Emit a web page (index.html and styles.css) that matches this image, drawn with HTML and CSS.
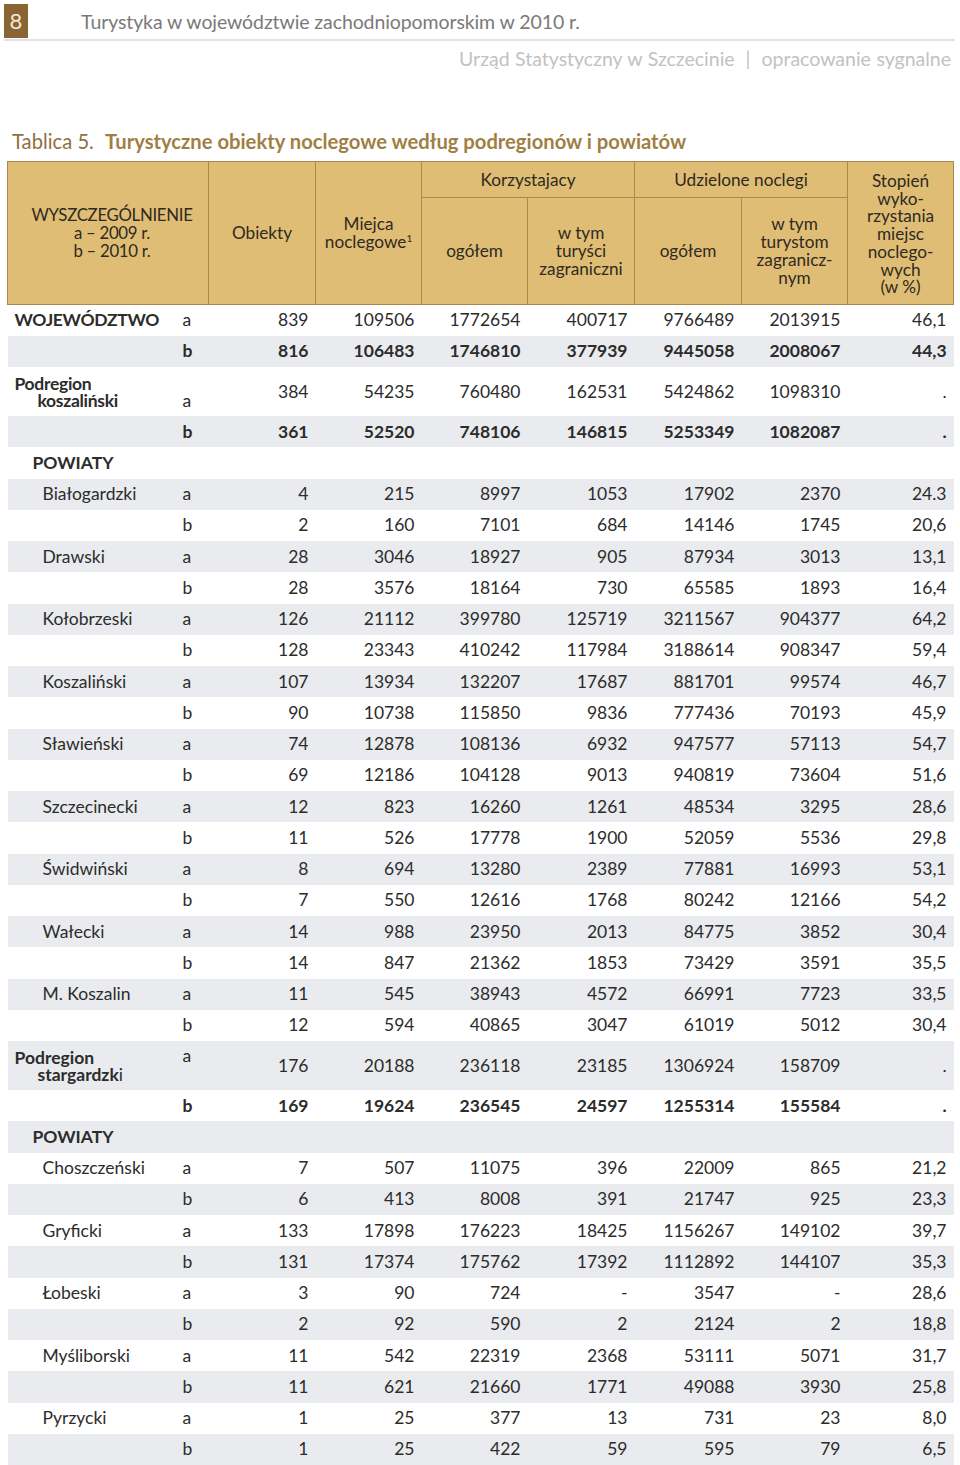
FILE: index.html
```html
<!DOCTYPE html>
<html lang="pl">
<head>
<meta charset="utf-8">
<title>Tablica 5</title>
<link rel="stylesheet" href="styles.css">
</head>
<body>
<header class="page-head">
  <div class="top-line">
    <span class="page-num">8</span>
    <span class="doc-title">Turystyka w województwie zachodniopomorskim w 2010 r.</span>
  </div>
  <div class="sub-line">Urząd Statystyczny w Szczecinie &nbsp;|&nbsp; opracowanie sygnalne</div>
</header>

<h1 class="table-title"><span class="tab-no">Tablica 5.</span> <span class="tab-name">Turystyczne obiekty noclegowe według podregionów i powiatów</span></h1>

<table class="data">
  <colgroup>
    <col class="c-name"><col class="c-let">
    <col class="c-n1"><col class="c-n2"><col class="c-n3"><col class="c-n4"><col class="c-n5"><col class="c-n6"><col class="c-n7">
  </colgroup>
  <thead>
    <tr class="h1">
      <th colspan="2" rowspan="2" class="wysz">WYSZCZEGÓLNIENIE<br>a – 2009 r.<br>b – 2010 r.</th>
      <th rowspan="2">Obiekty</th>
      <th rowspan="2">Miejca<br>noclegowe<sup>1</sup></th>
      <th colspan="2">Korzystajacy</th>
      <th colspan="2">Udzielone noclegi</th>
      <th rowspan="2" class="stop">Stopień<br>wyko-<br>rzystania<br>miejsc<br>noclego-<br>wych<br>(w %)</th>
    </tr>
    <tr class="h2">
      <th>ogółem</th>
      <th>w tym<br>turyści<br>zagraniczni</th>
      <th>ogółem</th>
      <th>w tym<br>turystom<br>zagranicz-<br>nym</th>
    </tr>
  </thead>
  <tbody>
    <tr><td class="nm lvl0 b">WOJEWÓDZTWO</td><td class="lt">a</td><td>839</td><td>109506</td><td>1772654</td><td>400717</td><td>9766489</td><td>2013915</td><td>46,1</td></tr>
    <tr class="bold"><td class="nm"></td><td class="lt">b</td><td>816</td><td>106483</td><td>1746810</td><td>377939</td><td>9445058</td><td>2008067</td><td>44,3</td></tr>
    <tr class="tall"><td class="nm lvl0 b two">Podregion<br><span class="ind">koszaliński</span></td><td class="lt bot">a</td><td>384</td><td>54235</td><td>760480</td><td>162531</td><td>5424862</td><td>1098310</td><td>.</td></tr>
    <tr class="bold"><td class="nm"></td><td class="lt">b</td><td>361</td><td>52520</td><td>748106</td><td>146815</td><td>5253349</td><td>1082087</td><td>.</td></tr>
    <tr><td class="nm lvl1 b">POWIATY</td><td class="lt"></td><td></td><td></td><td></td><td></td><td></td><td></td><td></td></tr>
    <tr><td class="nm lvl2">Białogardzki</td><td class="lt">a</td><td>4</td><td>215</td><td>8997</td><td>1053</td><td>17902</td><td>2370</td><td>24.3</td></tr>
    <tr><td class="nm"></td><td class="lt">b</td><td>2</td><td>160</td><td>7101</td><td>684</td><td>14146</td><td>1745</td><td>20,6</td></tr>
    <tr><td class="nm lvl2">Drawski</td><td class="lt">a</td><td>28</td><td>3046</td><td>18927</td><td>905</td><td>87934</td><td>3013</td><td>13,1</td></tr>
    <tr><td class="nm"></td><td class="lt">b</td><td>28</td><td>3576</td><td>18164</td><td>730</td><td>65585</td><td>1893</td><td>16,4</td></tr>
    <tr><td class="nm lvl2">Kołobrzeski</td><td class="lt">a</td><td>126</td><td>21112</td><td>399780</td><td>125719</td><td>3211567</td><td>904377</td><td>64,2</td></tr>
    <tr><td class="nm"></td><td class="lt">b</td><td>128</td><td>23343</td><td>410242</td><td>117984</td><td>3188614</td><td>908347</td><td>59,4</td></tr>
    <tr><td class="nm lvl2">Koszaliński</td><td class="lt">a</td><td>107</td><td>13934</td><td>132207</td><td>17687</td><td>881701</td><td>99574</td><td>46,7</td></tr>
    <tr><td class="nm"></td><td class="lt">b</td><td>90</td><td>10738</td><td>115850</td><td>9836</td><td>777436</td><td>70193</td><td>45,9</td></tr>
    <tr><td class="nm lvl2">Sławieński</td><td class="lt">a</td><td>74</td><td>12878</td><td>108136</td><td>6932</td><td>947577</td><td>57113</td><td>54,7</td></tr>
    <tr><td class="nm"></td><td class="lt">b</td><td>69</td><td>12186</td><td>104128</td><td>9013</td><td>940819</td><td>73604</td><td>51,6</td></tr>
    <tr><td class="nm lvl2">Szczecinecki</td><td class="lt">a</td><td>12</td><td>823</td><td>16260</td><td>1261</td><td>48534</td><td>3295</td><td>28,6</td></tr>
    <tr><td class="nm"></td><td class="lt">b</td><td>11</td><td>526</td><td>17778</td><td>1900</td><td>52059</td><td>5536</td><td>29,8</td></tr>
    <tr><td class="nm lvl2">Świdwiński</td><td class="lt">a</td><td>8</td><td>694</td><td>13280</td><td>2389</td><td>77881</td><td>16993</td><td>53,1</td></tr>
    <tr><td class="nm"></td><td class="lt">b</td><td>7</td><td>550</td><td>12616</td><td>1768</td><td>80242</td><td>12166</td><td>54,2</td></tr>
    <tr><td class="nm lvl2">Wałecki</td><td class="lt">a</td><td>14</td><td>988</td><td>23950</td><td>2013</td><td>84775</td><td>3852</td><td>30,4</td></tr>
    <tr><td class="nm"></td><td class="lt">b</td><td>14</td><td>847</td><td>21362</td><td>1853</td><td>73429</td><td>3591</td><td>35,5</td></tr>
    <tr><td class="nm lvl2">M. Koszalin</td><td class="lt">a</td><td>11</td><td>545</td><td>38943</td><td>4572</td><td>66991</td><td>7723</td><td>33,5</td></tr>
    <tr><td class="nm"></td><td class="lt">b</td><td>12</td><td>594</td><td>40865</td><td>3047</td><td>61019</td><td>5012</td><td>30,4</td></tr>
    <tr class="tall"><td class="nm lvl0 two"><b>Podregion</b><br><span class="ind"><b>stargardzk</b>i</span></td><td class="lt top">a</td><td>176</td><td>20188</td><td>236118</td><td>23185</td><td>1306924</td><td>158709</td><td>.</td></tr>
    <tr class="bold"><td class="nm"></td><td class="lt">b</td><td>169</td><td>19624</td><td>236545</td><td>24597</td><td>1255314</td><td>155584</td><td>.</td></tr>
    <tr><td class="nm lvl1 b">POWIATY</td><td class="lt"></td><td></td><td></td><td></td><td></td><td></td><td></td><td></td></tr>
    <tr><td class="nm lvl2">Choszczeński</td><td class="lt">a</td><td>7</td><td>507</td><td>11075</td><td>396</td><td>22009</td><td>865</td><td>21,2</td></tr>
    <tr><td class="nm"></td><td class="lt">b</td><td>6</td><td>413</td><td>8008</td><td>391</td><td>21747</td><td>925</td><td>23,3</td></tr>
    <tr><td class="nm lvl2">Gryficki</td><td class="lt">a</td><td>133</td><td>17898</td><td>176223</td><td>18425</td><td>1156267</td><td>149102</td><td>39,7</td></tr>
    <tr><td class="nm"></td><td class="lt">b</td><td>131</td><td>17374</td><td>175762</td><td>17392</td><td>1112892</td><td>144107</td><td>35,3</td></tr>
    <tr><td class="nm lvl2">Łobeski</td><td class="lt">a</td><td>3</td><td>90</td><td>724</td><td>-</td><td>3547</td><td>-</td><td>28,6</td></tr>
    <tr><td class="nm"></td><td class="lt">b</td><td>2</td><td>92</td><td>590</td><td>2</td><td>2124</td><td>2</td><td>18,8</td></tr>
    <tr><td class="nm lvl2">Myśliborski</td><td class="lt">a</td><td>11</td><td>542</td><td>22319</td><td>2368</td><td>53111</td><td>5071</td><td>31,7</td></tr>
    <tr><td class="nm"></td><td class="lt">b</td><td>11</td><td>621</td><td>21660</td><td>1771</td><td>49088</td><td>3930</td><td>25,8</td></tr>
    <tr><td class="nm lvl2">Pyrzycki</td><td class="lt">a</td><td>1</td><td>25</td><td>377</td><td>13</td><td>731</td><td>23</td><td>8,0</td></tr>
    <tr><td class="nm"></td><td class="lt">b</td><td>1</td><td>25</td><td>422</td><td>59</td><td>595</td><td>79</td><td>6,5</td></tr>
  </tbody>
</table>
</body>
</html>
```

FILE: styles.css
```css
html, body {
  margin: 0;
  padding: 0;
  background: #ffffff;
}
body {
  font-family: Lato, "Open Sans", "DejaVu Sans", sans-serif;
  color: #2c2c2c;
  width: 960px;
}

.page-head {
  padding: 4px 5px 0 4px;
}
.top-line {
  display: flex;
  align-items: center;
  height: 34px;
  border-bottom: 2px solid #e2e2e2;
  padding-bottom: 1px;
}
.page-num {
  width: 24px;
  height: 34px;
  background: #8a6433;
  color: #f3e8d6;
  font-size: 22px;
  line-height: 34px;
  text-align: center;
}
.doc-title {
  margin-left: 53px;
  font-size: 19.5px;
  color: #7a7a7a;
  font-weight: 400;
  letter-spacing: -0.1px;
}
.sub-line {
  text-align: right;
  font-size: 19.5px;
  color: #c2c2c2;
  padding-top: 6px;
  padding-right: 4px;
  font-weight: 400;
  word-spacing: 0.5px;
}

.table-title {
  margin: 59px 0 0 12px;
  font-size: 20.2px;
  font-weight: 400;
  line-height: 24px;
  height: 25px;
}
.tab-no {
  color: #8f713f;
  margin-right: 6px;
}
.tab-name {
  color: #a07f44;
  font-weight: 700;
}

.data {
  margin: 7px 0 0 7px;
  border-collapse: collapse;
  table-layout: fixed;
  width: 946px;
  font-size: 17.5px;
}
.c-name { width: 170px; }
.c-let { width: 31px; }
.c-n1 { width: 107px; }
.c-n2 { width: 106px; }
.c-n3 { width: 106px; }
.c-n4 { width: 107px; }
.c-n5 { width: 107px; }
.c-n6 { width: 106px; }
.c-n7 { width: 106px; }

.data thead th {
  background: #e0bd74;
  border: 1px solid #a8894f;
  font-weight: 400;
  color: #2e2a22;
  font-size: 17.2px;
  line-height: 17.8px;
  padding: 0 2px;
  text-align: center;
  vertical-align: middle;
}
.data thead th.wysz {
  font-size: 16.8px;
  letter-spacing: -0.3px;
  padding-left: 10px;
}
.data thead tr.h1 { height: 36px; }
.data thead tr.h2 { height: 107px; }
.data thead th.stop { padding-top: 2px; }
.data sup {
  font-size: 10px;
  vertical-align: 6px;
  line-height: 0;
}

.data tbody tr { height: 31.25px; }
.data tbody tr.tall { height: 49px; }
.data tbody tr:nth-child(even) { background: #e9ebee; }
.data tbody td {
  padding: 0 7px 0 0;
  text-align: right;
  vertical-align: middle;
  line-height: 20px;
  white-space: nowrap;
}
.data tbody tr.bold td { font-weight: 700; }
.data tbody td.nm {
  text-align: left;
  padding: 0;
}
.data tbody td.lt {
  text-align: left;
  padding: 0 0 0 5px;
}
.data tbody td.lt.bot { vertical-align: bottom; padding-bottom: 5px; }
.data tbody td.lt.top { vertical-align: top; padding-top: 5px; }
.data tbody td.b { font-weight: 700; }
.data tbody td.lvl0.b { letter-spacing: -0.3px; }
.data tbody td.two { line-height: 17px; }
.lvl0 { padding-left: 7px !important; }
.lvl1 { padding-left: 25px !important; }
.lvl2 { padding-left: 35px !important; }
.ind { padding-left: 23px; }
```
